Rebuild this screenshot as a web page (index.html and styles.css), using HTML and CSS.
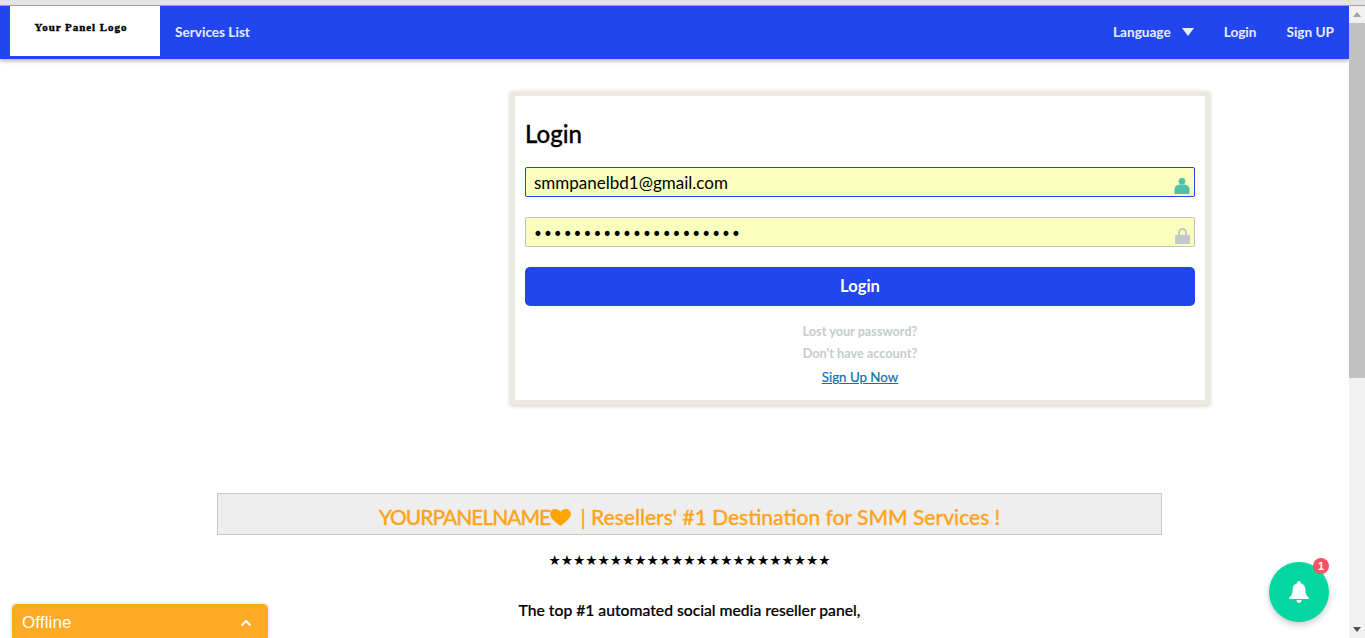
FILE: index.html
```html
<!DOCTYPE html>
<html>
<head>
    <title>Login</title>
    <meta name="viewport" content="width=device-width, initial-scale=1.0">
    <link rel="stylesheet" href="styles.css">
</head>
<body>
    <div class="top-strip"></div>
    <div class="window">
        <div class="page">
            <nav class="navbar">
                <div class="logo"><span class="logo-text">Your Panel Logo</span></div>
                <a class="nav-link services" href="#">Services List</a>
                <div class="nav-right">
                    <a class="nav-link language" href="#">Language <span class="caret"></span></a>
                    <a class="nav-link" href="#">Login</a>
                    <a class="nav-link" href="#">Sign UP</a>
                </div>
            </nav>

            <div class="login-row">
                <form class="login-card">
                    <h2>Login</h2>
                    <div class="field focused">
                        <span class="field-value">smmpanelbd1@gmail.com</span>
                        <svg class="field-icon" viewBox="0 0 16 16" width="16" height="16">
                            <circle cx="8" cy="3.2" r="3.3" fill="#4cc2ae"/>
                            <path d="M.5 16V11C.5 8.5 3 7 5.5 6.5H10.5C13 7 15.5 8.5 15.5 11V16Z" fill="#4cc2ae"/>
                        </svg>
                    </div>
                    <div class="field">
                        <span class="field-value dots">•••••••••••••••••••••</span>
                        <svg class="field-icon" viewBox="0 0 16 16" width="16" height="16">
                            <path d="M5 8V5C5 2.7 6.2 1 8.5 1S12 2.7 12 5V8" fill="none" stroke="#c2c9ca" stroke-width="2"/>
                            <rect x="1" y="7" width="15" height="9" rx="1" fill="#c2c9ca"/>
                        </svg>
                    </div>
                    <button class="login-btn" type="button">Login</button>
                    <p class="muted first">Lost your password?</p>
                    <p class="muted">Don't have account?</p>
                    <a class="signup" href="#">Sign Up Now</a>
                </form>
            </div>

            <div class="content">
                <h3 class="banner"><span class="panel-name">YOURPANELNAME</span><svg class="heart" viewBox="0 0 22 18" width="21" height="17"><path d="M11 18C6 14 0 10 0 5C0 2 2.4 0 5.2 0C7.6 0 9.8 1.2 11 3C12.2 1.2 14.4 0 16.8 0C19.6 0 22 2 22 5C22 10 16 14 11 18Z" fill="#ffa500"/></svg> <span class="pipe">|</span> Resellers' #1 Destination for SMM Services !</h3>
                <p class="stars">★★★★★★★★★★★★★★★★★★★★★★★</p>
                <p class="line">The top #1 automated social media reseller panel,</p>
            </div>
        </div>

        <div class="scrollbar">
            <span class="arrow up"></span>
            <div class="track"><div class="thumb"></div></div>
            <span class="arrow down"></span>
        </div>
    </div>

    <div class="chat-tab">
        <span>Offline</span>
        <svg viewBox="0 0 12 8" width="12" height="8"><path d="M1.5 6.5L6 2L10.5 6.5" fill="none" stroke="#fff" stroke-width="2"/></svg>
    </div>

    <div class="bell">
        <svg viewBox="0 0 20 22" width="20" height="22"><path d="M10 0C8.9 0 8.3.8 8.3 1.7V2.3C5.4 3 3.6 5.4 3.6 8.5C3.6 12.6 2.8 14.5 .4 16.6C0 17 0 18 1 18H19C20 18 20 17 19.6 16.6C17.2 14.5 16.4 12.6 16.4 8.5C16.4 5.4 14.6 3 11.7 2.3V1.7C11.7 .8 11.1 0 10 0ZM7.4 19C7.4 20.6 8.5 22 10 22S12.6 20.6 12.6 19Z" fill="#fff"/></svg>
        <span class="badge">1</span>
    </div>
</body>
</html>
```
FILE: styles.css
```css
* {
    box-sizing: border-box;
}
html, body {
    margin: 0;
    height: 638px;
    overflow: hidden;
}
body {
    font-family: Lato, "Noto Sans", sans-serif;
    background: #fff;
    color: #000;
}
.top-strip {
    height: 6px;
    background: #e3e3e3;
    border-bottom: 1px solid #a0a0a0;
}
.window {
    display: flex;
    height: 632px;
}
.page {
    flex: 1;
    min-width: 0;
    overflow: hidden;
}
.navbar {
    display: flex;
    align-items: center;
    height: 53px;
    padding-left: 10px;
    background: #2146ed;
    box-shadow: 0 2px 4px rgba(0,0,0,0.3);
}
.logo {
    display: flex;
    justify-content: center;
    width: 150px;
    height: 50px;
    padding: 13px 8px 0 0;
    margin-bottom: 3px;
    background: #fff;
}
.logo-text {
    font-family: "Liberation Serif", serif;
    font-size: 11px;
    font-weight: bold;
    line-height: 16px;
    letter-spacing: 0.95px;
    -webkit-text-stroke: 0.4px #000;
}
.nav-link {
    color: #e8ecfd;
    font-size: 13.6px;
    font-weight: 700;
    text-decoration: none;
}
.services {
    margin: 0 0 2px 15px;
}
.nav-right {
    display: flex;
    align-items: center;
    gap: 30px;
    margin: 0 0 2px auto;
    padding-right: 15px;
}
.language {
    display: flex;
    align-items: center;
}
.caret {
    margin-left: 11px;
    border-left: 6px solid transparent;
    border-right: 6px solid transparent;
    border-top: 8px solid #e8ecfd;
}
.login-row {
    display: flex;
    justify-content: flex-end;
    padding: 32px 139px 0 0;
}
.login-card {
    display: flex;
    flex-direction: column;
    width: 700px;
    height: 314px;
    padding: 23px 10px 0;
    background: #fff;
    border: 5px solid #ece9e1;
    border-radius: 3px;
    box-shadow: 0 1px 4px rgba(0,0,0,0.2);
}
h2 {
    margin: 0 0 18px;
    font-size: 24px;
    font-weight: 500;
    line-height: 30px;
    -webkit-text-stroke: 0.3px #000;
}
.field {
    display: flex;
    align-items: center;
    justify-content: space-between;
    height: 30px;
    margin-bottom: 20px;
    padding: 0 4px 0 8px;
    background: #fbffbd;
    border: 1px solid #bfc5c7;
    border-radius: 2px;
}
.field.focused {
    border-color: #2146ed;
}
.field-value {
    padding-top: 2px;
    font-size: 17px;
    line-height: 28px;
}
.dots {
    margin-left: -1px;
    padding-top: 4px;
    font-family: "DejaVu Sans", sans-serif;
    font-size: 16.8px;
}
.field-icon {
    align-self: flex-end;
    margin-bottom: 2px;
}
.login-btn {
    height: 39px;
    margin-bottom: 16px;
    padding-bottom: 2px;
    color: #fff;
    font-family: inherit;
    font-size: 16.5px;
    font-weight: 700;
    background: #2146ed;
    border: none;
    border-radius: 5px;
}
.muted {
    margin: 0 0 4px;
    color: #c6cccd;
    font-size: 12.7px;
    font-weight: 700;
    line-height: 18px;
    text-align: center;
}
.signup {
    margin-top: 1px;
    color: #0a70b0;
    font-size: 13.3px;
    line-height: 20px;
    text-align: center;
    align-self: center;
    -webkit-text-stroke: 0.2px #0a70b0;
}
.content {
    width: 945px;
    margin: 88px 0 0 217px;
    text-align: center;
}
.banner {
    margin: 0;
    height: 42px;
    color: #ffa51d;
    font-size: 21px;
    font-weight: 500;
    line-height: 46px;
    white-space: nowrap;
    background: #eee;
    border: 1px solid #c8c8c8;
    -webkit-text-stroke: 0.3px #ffa51d;
}
.panel-name {
    letter-spacing: -1.05px;
}
.heart {
    vertical-align: -1px;
}
.pipe {
    margin-left: 4px;
}
.stars {
    margin: 14px 0 0;
    font-family: "DejaVu Sans", sans-serif;
    font-size: 13.7px;
    line-height: 22px;
}
.line {
    margin: 29px 0 0;
    font-size: 15.7px;
    font-weight: 500;
    line-height: 20px;
    -webkit-text-stroke: 0.2px #000;
}
.scrollbar {
    display: flex;
    flex-direction: column;
    align-items: center;
    width: 16px;
    background: #f1f1f1;
}
.track {
    flex: 1;
    width: 100%;
}
.thumb {
    width: 100%;
    height: 355px;
    background: #c1c1c1;
}
.arrow {
    flex: none;
    width: 0;
    height: 0;
    margin: 6px 0;
    border-left: 4px solid transparent;
    border-right: 4px solid transparent;
}
.arrow.up {
    margin: 6px 0;
    border-bottom: 5px solid #a3a3a3;
}
.arrow.down {
    border-top: 5px solid #505050;
}
.chat-tab {
    position: absolute;
    left: 12px;
    top: 604px;
    display: flex;
    align-items: center;
    justify-content: space-between;
    width: 256px;
    height: 34px;
    padding: 4px 16px 0 10px;
    color: #fff;
    font-family: "Liberation Sans", Arial, sans-serif;
    font-size: 17px;
    letter-spacing: 0.1px;
    background: #fdaa24;
    border-radius: 5px 5px 0 0;
    box-shadow: 0 0 3px rgba(0,0,0,0.2);
}
.bell {
    position: absolute;
    left: 1269px;
    top: 562px;
    display: flex;
    align-items: center;
    justify-content: center;
    width: 60px;
    height: 60px;
    background: #04d6a1;
    border-radius: 50%;
    box-shadow: 0 3px 6px rgba(0,0,0,0.2);
}
.badge {
    position: absolute;
    top: -4px;
    right: 0;
    width: 16px;
    height: 16px;
    color: #fff;
    font-family: "Liberation Sans", Arial, sans-serif;
    font-size: 11px;
    font-weight: bold;
    line-height: 16px;
    text-align: center;
    background: #fb5360;
    border-radius: 50%;
}
```
